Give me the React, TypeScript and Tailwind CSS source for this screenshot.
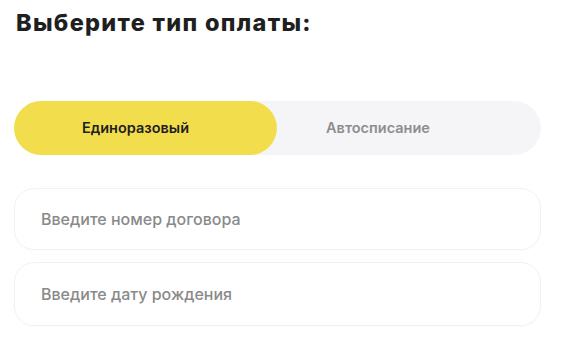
import React from "react";

export default function App() {
  return (
    <div className="w-[563px] h-[353px] bg-white font-['Inter',sans-serif] pl-[14px] pr-[22px] pt-[8px]">
      <h1 className="text-[23.5px] leading-[30px] font-extrabold text-[#1f1f1f] pl-[2px] tracking-[1.3px]">
        Выберите тип оплаты:
      </h1>
      <div className="mt-[63px] flex h-[54px] rounded-full bg-[#f5f5f7]">
        <div className="w-[263px] rounded-full bg-[#f2de4d] flex items-center justify-center pr-[20px] text-[14.5px] font-semibold text-[#1f1f1f]">
          Единоразовый
        </div>
        <div className="flex-1 flex items-center justify-center pr-[62px] text-[14.5px] font-semibold text-[#8d8d90]">
          Автосписание
        </div>
      </div>
      <div className="mt-[33px] flex flex-col gap-[12px]">
        <div className="h-[62px] rounded-[20px] border border-[#f2f2f4] shadow-[0_1px_2px_rgba(0,0,0,0.02)] flex items-center pl-[26px] text-[16px] font-medium text-[#8a8a8a]">
          Введите номер договора
        </div>
        <div className="h-[64px] rounded-[20px] border border-[#f2f2f4] shadow-[0_1px_2px_rgba(0,0,0,0.02)] flex items-center pl-[26px] text-[16px] font-medium text-[#8a8a8a]">
          Введите дату рождения
        </div>
      </div>
    </div>
  );
}
